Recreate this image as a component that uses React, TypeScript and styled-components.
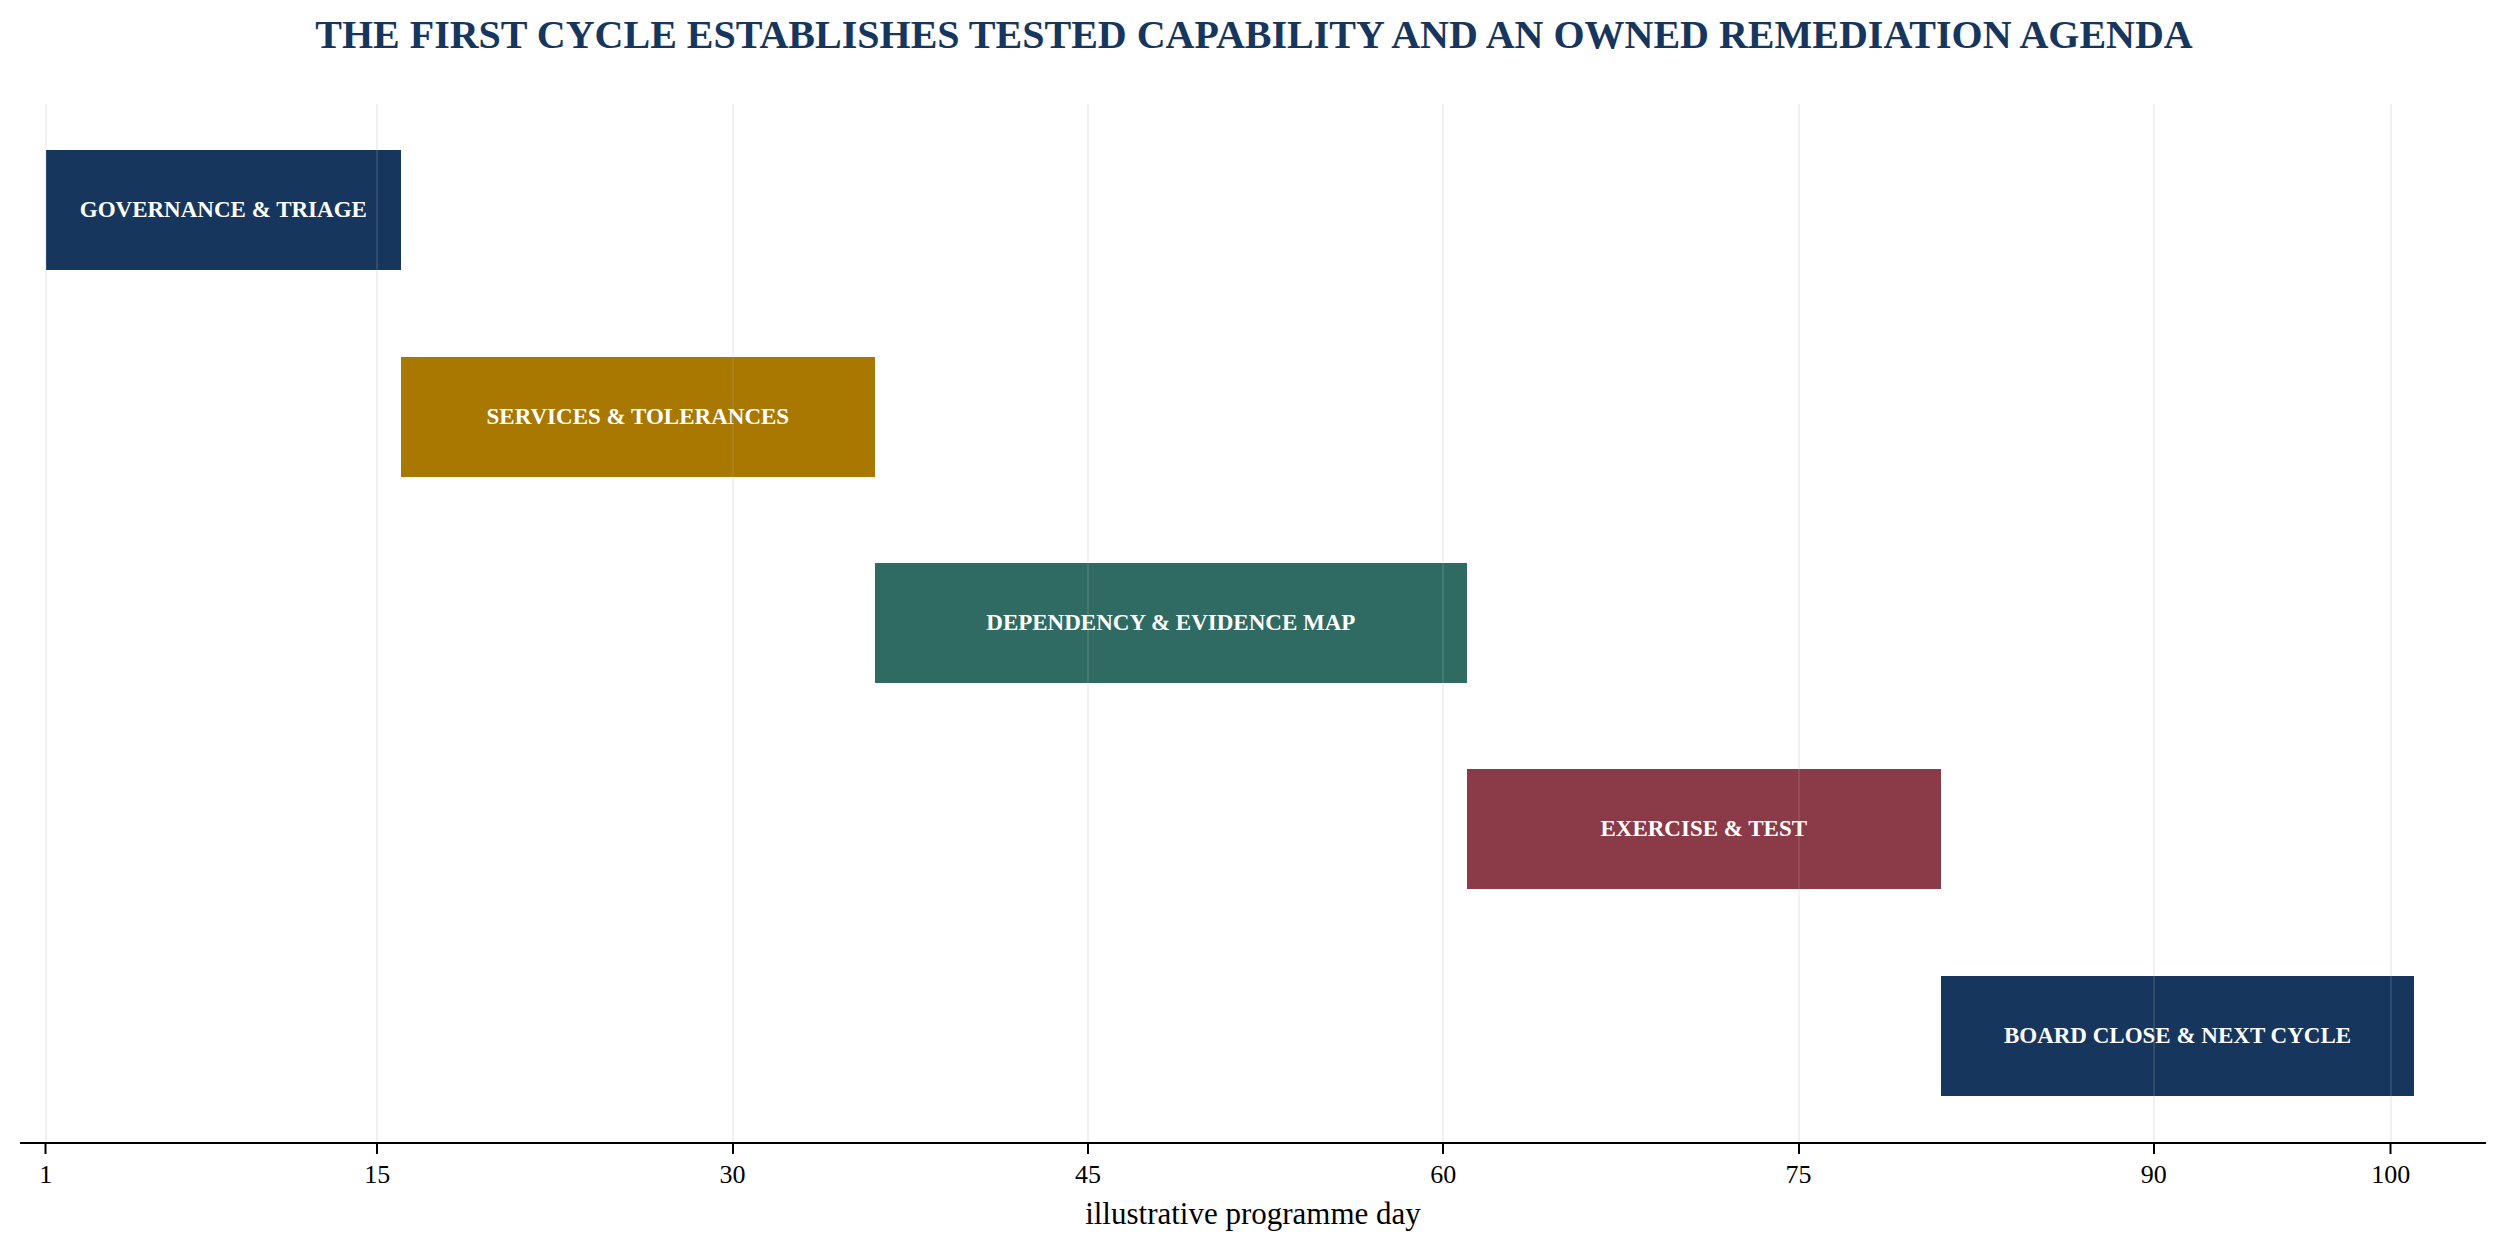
import React from "react"
import styled, { createGlobalStyle } from "styled-components"

const NAVY = "#17365d"

const GlobalStyle = createGlobalStyle`
  html, body {
    margin: 0;
    padding: 0;
    background: #ffffff;
  }
  body {
    font-family: "Liberation Serif", "Times New Roman", serif;
  }
`

// chart scale: day 1 sits 25.7px into the axis, one day = 23.687px
const X0 = 25.7
const PER_DAY = 23.687
const xOf = (day: number) => X0 + (day - 1) * PER_DAY

const phases = [
  { label: "GOVERNANCE & TRIAGE", start: 1, end: 16, color: NAVY },
  { label: "SERVICES & TOLERANCES", start: 16, end: 36, color: "#a87800" },
  { label: "DEPENDENCY & EVIDENCE MAP", start: 36, end: 61, color: "#2f6b62" },
  { label: "EXERCISE & TEST", start: 61, end: 81, color: "#8b3a47" },
  { label: "BOARD CLOSE & NEXT CYCLE", start: 81, end: 101, color: NAVY },
]

const ticks = [1, 15, 30, 45, 60, 75, 90, 100]

const Figure = styled.div`
  width: 2508px;
  height: 1253px;
  display: flex;
  flex-direction: column;
  overflow: hidden;
`

const Title = styled.h1`
  margin: 0;
  padding-top: 15px;
  font-size: 40px;
  line-height: 40px;
  font-weight: 700;
  text-align: center;
  color: ${NAVY};
`

const Chart = styled.div`
  margin: 49px 0 0 20px;
  width: 2466px;
  display: flex;
  flex-direction: column;
`

const Plot = styled.div`
  position: relative;
  height: 1038px;
  display: grid;
  grid-template-rows: repeat(5, 206.4px);
  padding: 3px 0;
  box-sizing: border-box;
`

const Row = styled.div`
  display: flex;
  align-items: center;
`

const Bar = styled.div<{ $color: string }>`
  height: 120px;
  background: ${(p) => p.$color};
  display: flex;
  align-items: center;
  justify-content: center;
  color: #ffffff;
  font-size: 23px;
  font-weight: 700;
  white-space: nowrap;
`

const GridLine = styled.div`
  position: absolute;
  top: 0;
  bottom: 0;
  width: 2px;
  margin-left: -1px;
  background: rgba(176, 176, 176, 0.18);
  pointer-events: none;
`

const Axis = styled.div`
  position: relative;
  height: 110px;
  border-top: 2px solid #000000;
`

const Tick = styled.div`
  position: absolute;
  top: 0;
  display: flex;
  flex-direction: column;
  align-items: center;
  transform: translateX(-50%);
`

const TickMark = styled.div`
  width: 2px;
  height: 10px;
  background: #000000;
`

const TickLabel = styled.div`
  margin-top: 8px;
  font-size: 26px;
  line-height: 26px;
  color: #000000;
`

const AxisLabel = styled.div`
  position: absolute;
  left: 0;
  right: 0;
  top: 54px;
  text-align: center;
  font-size: 31px;
  line-height: 31px;
  color: #000000;
`

export default function App() {
  return (
    <>
      <GlobalStyle />
      <Figure>
        <Title>THE FIRST CYCLE ESTABLISHES TESTED CAPABILITY AND AN OWNED REMEDIATION AGENDA</Title>
        <Chart>
          <Plot>
            {phases.map((p) => (
              <Row key={p.label}>
                <Bar
                  $color={p.color}
                  style={{ marginLeft: xOf(p.start), width: (p.end - p.start) * PER_DAY }}
                >
                  {p.label}
                </Bar>
              </Row>
            ))}
            {ticks.map((t) => (
              <GridLine key={t} style={{ left: xOf(t) }} />
            ))}
          </Plot>
          <Axis>
            {ticks.map((t) => (
              <Tick key={t} style={{ left: xOf(t) }}>
                <TickMark />
                <TickLabel>{t}</TickLabel>
              </Tick>
            ))}
            <AxisLabel>illustrative programme day</AxisLabel>
          </Axis>
        </Chart>
      </Figure>
    </>
  )
}
